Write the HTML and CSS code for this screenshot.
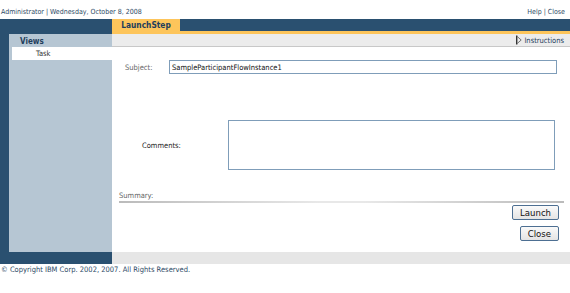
FILE: index.html
```html
<!DOCTYPE html>
<html>
<head>
<meta charset="utf-8">
<title>LaunchStep</title>
<link rel="stylesheet" href="styles.css">
</head>
<body>
<div class="topbar">
  <span>Administrator | Wednesday, October 8, 2008</span>
  <span>Help | Close</span>
</div>
<div class="frame">
  <div class="side">
    <div class="nav">
      <div class="navhead">Views</div>
      <div class="navitem">Task</div>
    </div>
  </div>
  <div class="main">
    <div class="tabs"><span class="tab">LaunchStep</span></div>
    <div class="toolbar">
      <span class="instr">
        <svg width="6" height="10" viewBox="0 0 6 10"><path d="M0.7 0.5 L0.7 9.5" stroke="#333" stroke-width="1.4"/><path d="M1.2 1.5 L5.2 5 L1.2 8.5" fill="none" stroke="#666" stroke-width="0.9"/></svg>
        Instructions
      </span>
    </div>
    <div class="content">
      <div class="row subject">
        <label class="lbl">Subject:</label>
        <input class="txt" type="text" value="SampleParticipantFlowInstance1">
      </div>
      <div class="row comments">
        <label class="lbl">Comments:</label>
        <textarea class="area"></textarea>
      </div>
      <div class="summary">Summary:</div>
      <div class="rule"></div>
      <div class="buttons">
        <button class="btn">Launch</button>
        <button class="btn">Close</button>
      </div>
    </div>
    <div class="foot"></div>
  </div>
</div>
<div class="copy">© Copyright IBM Corp. 2002, 2007. All Rights Reserved.</div>
</body>
</html>
```

FILE: styles.css
```css
body {
  margin:0;
  font-family:"DejaVu Sans Condensed", "DejaVu Sans", sans-serif;
  font-stretch:condensed;
  font-size:7.5px;
  color:#333;
  background:white;
}
.topbar {
  display:flex;
  justify-content:space-between;
  height:19px;
  line-height:24px;
  padding:0 5px 0 1px;
  font-size:7px;
  color:#2d4a66;
}
.frame {
  display:grid;
  grid-template-columns:112px 1fr;
  background:#2a5070;
}
.side {
  padding:15px 0 12px 9px;
}
.nav {
  height:100%;
  background:#b6c6d3;
}
.navhead {
  font-weight:bold;
  font-size:8px;
  color:#1f3e5c;
  padding:2px 0 0 11px;
  height:11px;
  line-height:12px;
}
.navitem {
  background:white;
  margin-left:3px;
  height:13px;
  line-height:13px;
  padding-left:24px;
  color:#333;
}
.main {
  display:flex;
  flex-direction:column;
}
.tabs {
  height:12px;
}
.tab {
  display:block;
  width:68px;
  height:12px;
  line-height:12px;
  text-align:center;
  background:#fdc55b;
  font-weight:bold;
  font-size:8.3px;
  color:#1f3e5c;
}
.toolbar {
  border-top:3px solid #fdc55b;
  border-bottom:1px solid #c8c8c8;
  background:#ececec;
  height:12px;
  display:flex;
  justify-content:flex-end;
  align-items:center;
  padding-right:6px;
}
.instr {
  display:flex;
  align-items:center;
  gap:2px;
  color:#1f3e5c;
}
.content {
  background:white;
  height:205px;
  display:flex;
  flex-direction:column;
  padding:0 6px 0 7px;
}
.row {
  display:flex;
  align-items:center;
}
.lbl {
  color:#666;
}
.subject {
  margin-top:13px;
  padding-left:6px;
}
.subject .lbl {
  width:44px;
}
.txt {
  width:388px;
  height:14px;
  box-sizing:border-box;
  border:1px solid #7f9db9;
  padding:0 2px;
  font-family:inherit;
  font-stretch:condensed;
  font-size:7.5px;
  color:#111;
}
.comments {
  margin-top:46px;
  padding-left:23px;
}
.comments .lbl {
  width:86px;
  color:#222;
}
.area {
  width:327px;
  height:50px;
  box-sizing:border-box;
  border:1px solid #7f9db9;
  resize:none;
  margin:0;
}
.summary {
  margin-top:21px;
  color:#666;
  height:10px;
}
.rule {
  height:2px;
  background:linear-gradient(to right, #bbb, #e8e8e8 45%, #e8e8e8 55%, #bbb);
}
.buttons {
  display:flex;
  flex-direction:column;
  align-items:flex-end;
  gap:6px;
  margin-top:2px;
  padding-right:5px;
}
.btn {
  height:15px;
  padding:0 7px;
  font-family:inherit;
  font-stretch:condensed;
  font-size:9.5px;
  color:#111;
  background:linear-gradient(#fafafa, #e4e4e4);
  border:1px solid #4d6f92;
  border-radius:2px;
}
.foot {
  height:12px;
  background:#e6e6e6;
}
.copy {
  padding:1px 0 0 1px;
  color:#2d4a66;
  line-height:10px;
}
```
